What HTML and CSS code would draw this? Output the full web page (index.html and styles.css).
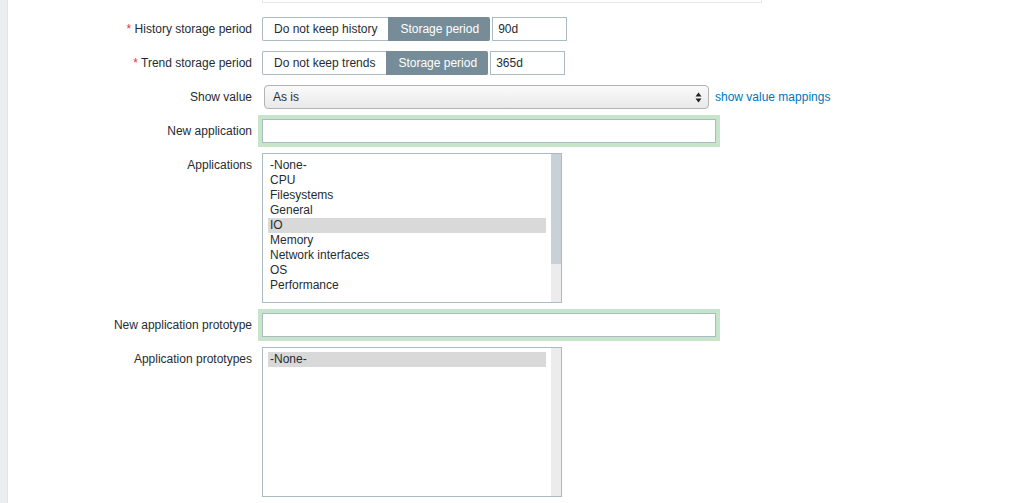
FILE: index.html
```html
<!DOCTYPE html>
<html lang="en">
<head>
  <meta charset="UTF-8" />
  <title>Item</title>
  <link rel="stylesheet" href="styles.css">
</head>
<body>
<div class="page">
  <div class="sidebar"></div>
  <div class="main">
    <div class="top-box"></div>

    <div class="form">
      <label class="form-label"><span class="req">*</span> History storage period</label>
      <div class="form-field">
        <div class="segmented">
          <span class="seg">Do not keep history</span>
          <span class="seg active">Storage period</span>
        </div>
        <div class="input short">90d</div>
      </div>

      <label class="form-label"><span class="req">*</span> Trend storage period</label>
      <div class="form-field">
        <div class="segmented">
          <span class="seg">Do not keep trends</span>
          <span class="seg active">Storage period</span>
        </div>
        <div class="input short">365d</div>
      </div>

      <label class="form-label">Show value</label>
      <div class="form-field">
        <div class="select">
          <span>As is</span>
          <svg width="7" height="11" viewBox="0 0 7 11"><path d="M3.5 0.5 L6.5 4.5 L0.5 4.5 Z M3.5 10.5 L6.5 6.5 L0.5 6.5 Z" fill="#222"/></svg>
        </div>
        <a href="#" class="link">show value mappings</a>
      </div>

      <label class="form-label">New application</label>
      <div class="form-field">
        <div class="input wide focus"></div>
      </div>

      <label class="form-label top">Applications</label>
      <div class="form-field">
        <div class="listbox">
          <ul class="list-items">
            <li>-None-</li>
            <li>CPU</li>
            <li>Filesystems</li>
            <li>General</li>
            <li class="selected">IO</li>
            <li>Memory</li>
            <li>Network interfaces</li>
            <li>OS</li>
            <li>Performance</li>
          </ul>
          <div class="scrollbar"><div class="thumb"></div></div>
        </div>
      </div>

      <label class="form-label">New application prototype</label>
      <div class="form-field">
        <div class="input wide focus"></div>
      </div>

      <label class="form-label top">Application prototypes</label>
      <div class="form-field">
        <div class="listbox">
          <ul class="list-items">
            <li class="selected">-None-</li>
          </ul>
          <div class="scrollbar"></div>
        </div>
      </div>
    </div>
  </div>
</div>
</body>
</html>
```

FILE: styles.css
```css
body {
  margin: 0;
  font-family: 'Liberation Sans', Arial, sans-serif;
  font-size: 12px;
  color: #1f2c33;
  background: #fff;
}
.page {
  display: flex;
  min-height: 503px;
}
.sidebar {
  width: 7px;
  background: #ebeef0;
  border-right: 1px solid #e1e5e8;
}
.main {
  flex: 1;
}
.top-box {
  width: 498px;
  height: 2px;
  margin-left: 254px;
  border: 1px solid #e6e9eb;
  border-top: none;
}
.form {
  display: grid;
  grid-template-columns: 244px 1fr;
  column-gap: 10px;
  row-gap: 10px;
  margin-top: 14px;
}
.form-label {
  text-align: right;
  line-height: 14px;
  padding-top: 5px;
  white-space: nowrap;
}
.form-label.top {
  padding-top: 5px;
}
.req {
  color: #e33734;
}
.form-field {
  display: flex;
  align-items: center;
  gap: 2px;
}
.segmented {
  display: flex;
  height: 24px;
}
.seg {
  display: flex;
  align-items: center;
  padding: 0 11px;
  border: 1px solid #acbbc2;
  border-right: none;
  border-radius: 2px 0 0 2px;
  background: #fff;
}
.seg.active {
  background: #768d99;
  border-color: #768d99;
  color: #fff;
  border-radius: 0 2px 2px 0;
}
.input {
  box-sizing: border-box;
  height: 24px;
  border: 1px solid #acbbc2;
  padding: 0 5px;
  display: flex;
  align-items: center;
  background: #fff;
}
.input.short {
  width: 75px;
}
.input.wide {
  width: 454px;
}
.input.focus {
  box-shadow: 0 0 0 4px #c6e5ca;
}
.select {
  box-sizing: border-box;
  width: 445px;
  height: 24px;
  margin-left: 2px;
  border: 1px solid #b3b3b3;
  border-radius: 4px;
  background: linear-gradient(#fafafa, #e9e9e9);
  display: flex;
  align-items: center;
  justify-content: space-between;
  padding: 0 6px 0 8px;
}
.link {
  margin-left: 4px;
  color: #0275b8;
  text-decoration: none;
}
.listbox {
  box-sizing: border-box;
  width: 300px;
  height: 150px;
  border: 1px solid #acbbc2;
  display: flex;
  background: #fff;
}
.list-items {
  flex: 1;
  list-style: none;
  margin: 0;
  padding: 4px 5px 0 5px;
}
.list-items li {
  line-height: 15px;
  padding-left: 2px;
}
.list-items li.selected {
  background: #d9d9d9;
}
.scrollbar {
  width: 10px;
  background: #ececec;
}
.thumb {
  height: 110px;
  background: #c8d1d7;
}
```
